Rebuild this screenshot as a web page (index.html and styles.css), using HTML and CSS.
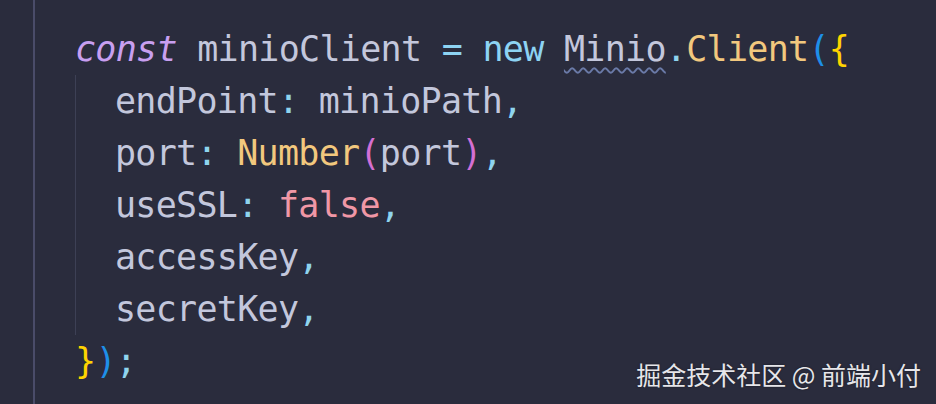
FILE: index.html
```html
<!DOCTYPE html>
<html lang="zh">
<head>
<meta charset="utf-8">
<title>minio client</title>
<link rel="stylesheet" href="styles.css">
</head>
<body>
<div class="editor">
  <div class="gutter"></div>
  <div class="code">
    <div class="line"><span class="kw">const</span> minioClient <span class="op">=</span> <span class="new">new</span> <span class="squig">Minio</span><span class="punct">.</span><span class="fn">Client</span><span class="br1">(</span><span class="br2">{</span></div>
    <div class="block">
      <div class="line">endPoint<span class="punct">:</span> minioPath<span class="punct">,</span></div>
      <div class="line">port<span class="punct">:</span> <span class="fn">Number</span><span class="br3">(</span>port<span class="br3">)</span><span class="punct">,</span></div>
      <div class="line">useSSL<span class="punct">:</span> <span class="bool">false</span><span class="punct">,</span></div>
      <div class="line">accessKey<span class="punct">,</span></div>
      <div class="line">secretKey<span class="punct">,</span></div>
    </div>
    <div class="line"><span class="br2">}</span><span class="br1">)</span><span class="punct">;</span></div>
  </div>
  <div class="watermark">掘金技术社区 @ 前端小付</div>
</div>
</body>
</html>
```
FILE: styles.css
```css
html, body {
  margin: 0;
  padding: 0;
  background: #2a2c3d;
}
.editor {
  position: relative;
  display: flex;
  width: 936px;
  height: 404px;
  overflow: hidden;
  background: #2a2c3d;
}
.gutter {
  width: 33px;
  flex: none;
  border-right: 2px solid #4a4c69;
}
.code {
  padding: 23px 0 0 40px;
  font-family: "DejaVu Sans Mono", "Liberation Mono", monospace;
  font-size: 35px;
  letter-spacing: -0.7px;
  line-height: 52px;
  color: #c3c7dc;
}
.block {
  border-left: 1px solid #3d4055;
  padding-left: 40px;
}
.line {
  height: 52px;
  white-space: pre;
}
.block .line {
  margin-left: -1px;
}
.kw {
  color: #c89ff0;
  font-style: italic;
}
.op, .new {
  color: #8dd3f3;
}
.punct {
  color: #8fd4ee;
}
.fn {
  color: #f2c87e;
}
.br1 {
  color: #1e8fe8;
}
.br2 {
  color: #ffd400;
}
.br3 {
  color: #d46fd3;
}
.bool {
  color: #f097a6;
}
.squig {
  text-decoration: underline wavy #6a7aa8;
  text-decoration-thickness: 1.5px;
  text-underline-offset: 6px;
}
.watermark {
  position: absolute;
  right: 15px;
  bottom: 15px;
  font-family: "Noto Sans CJK SC", "Noto Sans", sans-serif;
  font-size: 25px;
  line-height: 30px;
  color: #e6e6ea;
  text-shadow: 0 0 2px rgba(0, 0, 0, 0.5);
}
```
